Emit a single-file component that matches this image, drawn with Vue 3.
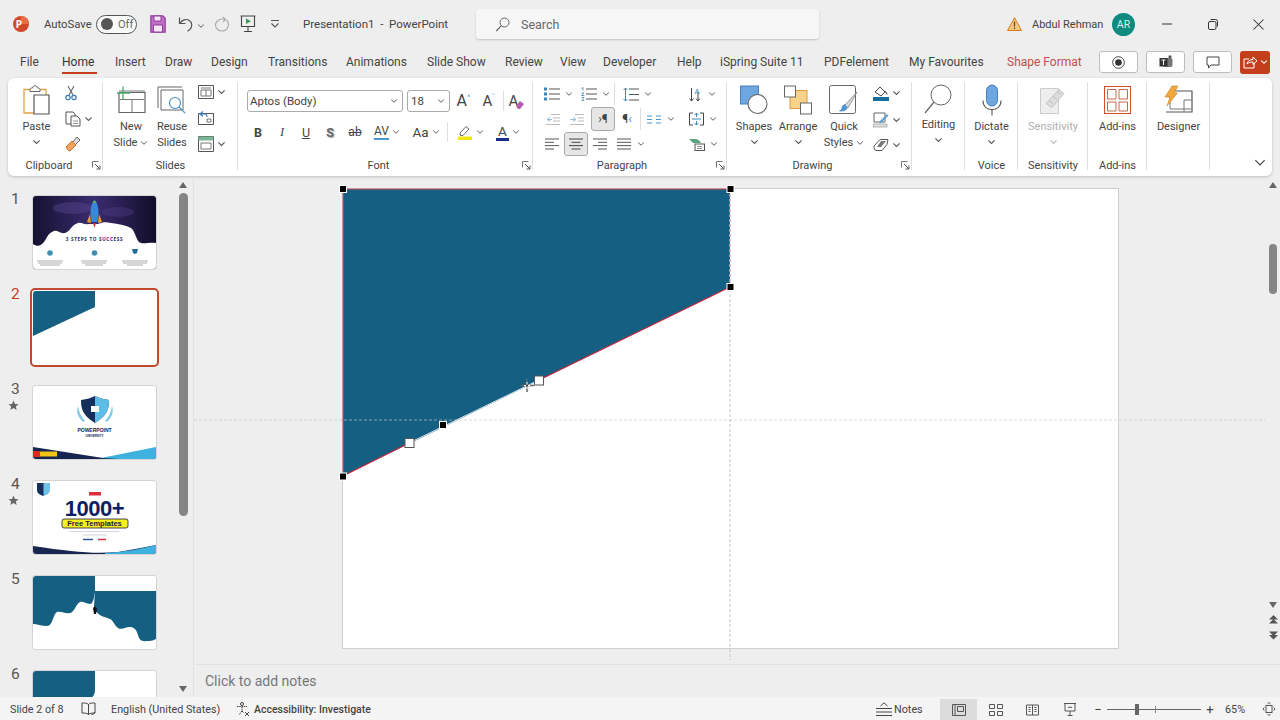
<script setup>
const tabs = [
  { t: 'File', x: 20 }, { t: 'Home', x: 62, active: true }, { t: 'Insert', x: 115 }, { t: 'Draw', x: 165 },
  { t: 'Design', x: 211 }, { t: 'Transitions', x: 268 }, { t: 'Animations', x: 346 }, { t: 'Slide Show', x: 427 },
  { t: 'Review', x: 505 }, { t: 'View', x: 560 }, { t: 'Developer', x: 603 }, { t: 'Help', x: 677 },
  { t: 'iSpring Suite 11', x: 720 }, { t: 'PDFelement', x: 824 }, { t: 'My Favourites', x: 909 }, { t: 'Shape Format', x: 1007, shape: true }
]
const tabItems = tabs.map((tab, i) => ({
  ...tab,
  width: (i < tabs.length - 1 ? tabs[i + 1].x : 1099) - tab.x
}))
</script>

<template>
  <div class="app">
    <svg class="defs" width="0" height="0">
      <symbol id="chev" viewBox="0 0 10 6"><path d="M1.5 1.2 5 4.6l3.5-3.4" fill="none" stroke="#555" stroke-width="1.2" /></symbol>
      <symbol id="launch" viewBox="0 0 9 9"><path d="M.5.5h6M.5.5v6" fill="none" stroke="#777" /><path d="M3 3l5 5M8 4.5V8H4.5" fill="none" stroke="#555" /></symbol>
    </svg>

    <header class="titlebar">
      <svg class="logo" width="18" height="18" viewBox="0 0 18 18"><circle cx="9" cy="9" r="8" fill="#d2492a" /><path d="M9 1a8 8 0 0 1 8 8H9z" fill="#ed6c47" /><text x="3.8" y="12.6" class="logo-t">P</text></svg>
      <span class="autosave">AutoSave</span>
      <span class="toggle"><i class="knob"></i><span>Off</span></span>
      <svg class="save" width="16" height="18" viewBox="0 0 16 18"><path d="M.8.8h12l2.4 2.4v14H.8z" fill="#c06fc6" stroke="#8e3f9a" stroke-width="1.2" /><path d="M4 1h7v5H4zM3.5 10h9v7h-9z" fill="#f6e6f7" stroke="#8e3f9a" /></svg>
      <svg class="undo" width="16" height="16" viewBox="0 0 16 16"><path d="M1.5 1.5v6h6M2 7.2C4 4 8 2.6 11 4.2c3.6 2 3.6 7 .5 9.5l-2 1.5" fill="none" stroke="#555" stroke-width="1.2" /></svg>
      <svg class="c8 undo-c" width="8" height="6"><use href="#chev" /></svg>
      <svg class="redo" width="16" height="16" viewBox="0 0 16 16"><path d="M9 1l2.500 2.500L9 6" fill="none" stroke="#aaa" stroke-width="1.100" /><path d="M11.500 3.500C7 2 2 4.500 1.500 8.500c-.3 4 3 6.500 6.500 6.500s6.500-2.500 6.500-6.500c0-2-1-3.500-2-4.500" fill="none" stroke="#aaa" stroke-width="1.100" /></svg>
      <svg class="present" width="16" height="18" viewBox="0 0 16 18"><path d="M.5 1h15M1.500 1v10.500h13V1M8 11.500V16M4 16.500h8" fill="none" stroke="#444" stroke-width="1.100" /><path d="M6 3.500l5 2.700-5 2.700z" fill="#3b9a5a" /></svg>
      <svg class="more" width="10" height="10" viewBox="0 0 10 10"><path d="M1 1.500h8M1.500 4.500 5 8l3.500-3.500" fill="none" stroke="#555" stroke-width="1.100" /></svg>
      <span class="doc">Presentation1 &nbsp;-&nbsp; PowerPoint</span>
      <div class="search">
        <svg width="15" height="15" viewBox="0 0 15 15"><circle cx="9.500" cy="5.500" r="4.500" fill="none" stroke="#666" /><path d="M6.200 8.800 1.200 14" stroke="#666" stroke-width="1.100" /></svg>
        <span>Search</span>
      </div>
      <svg class="warn" width="15" height="14" viewBox="0 0 15 14"><path d="M7.500.7 14.500 13.500H.5z" fill="#f7c87f" stroke="#d97a1e" /><path d="M7.500 4.500v5M7.500 10.500v1.500" stroke="#5a3d10" stroke-width="1.200" /></svg>
      <span class="user">Abdul Rehman</span>
      <span class="avatar">AR</span>
      <svg class="min" width="10" height="2"><path d="M0 1h10" stroke="#333" /></svg>
      <svg class="max" width="10" height="11" viewBox="0 0 10 11"><rect x=".5" y="2.500" width="7.500" height="8" rx="1.500" fill="none" stroke="#333" /><path d="M2.500.5h5a2 2 0 0 1 2 2v5" fill="none" stroke="#333" /></svg>
      <svg class="close" width="11" height="11"><path d="M.5.500l10 10M10.500.500l-10 10" stroke="#333" stroke-width="1.050" /></svg>
    </header>

    <nav class="tabs">
      <span v-for="tab in tabItems" :key="tab.t" class="tab" :class="{ active: tab.active, shape: tab.shape }" :style="{ width: tab.width + 'px' }"><b>{{ tab.t }}</b></span>
      <div class="tab-btns">
        <span class="tbtn"><svg width="13" height="13" viewBox="0 0 13 13"><circle cx="6.500" cy="6.500" r="5.800" fill="none" stroke="#444" /><circle cx="6.500" cy="6.500" r="3.300" fill="#333" /></svg></span>
        <span class="tbtn"><svg width="14" height="14" viewBox="0 0 14 14"><rect x="4" y="3" width="9.500" height="9" rx="2" fill="#777" /><rect x=".5" y="3" width="8" height="8.500" fill="#333" /><circle cx="11" cy="1.800" r="1.600" fill="#555" /><path d="M2.500 5h4M4.500 5v5" stroke="#fff" /></svg></span>
        <span class="tbtn"><svg width="14" height="13" viewBox="0 0 14 13"><path d="M1 1h12v8H5l-2.500 3V9H1z" fill="none" stroke="#444" /></svg></span>
        <span class="share"><svg width="15" height="14" viewBox="0 0 15 14"><path d="M1 4h5M1 4v9h10V8" fill="none" stroke="#fff" /><path d="M4 9c.5-3 3-4.500 6-4.500V2l4 3.800-4 3.700V7C8 7 5.500 7.500 4 9z" fill="none" stroke="#fff" /></svg><svg width="8" height="6" viewBox="0 0 10 6"><path d="M1.500 1.200 5 4.600l3.500-3.400" fill="none" stroke="#fff" stroke-width="1.400" /></svg></span>
      </div>
    </nav>

    <section class="ribbon">
      <div class="group g-clip">
        <div class="gbody">
          <div class="big w-paste">
            <svg width="28" height="32" viewBox="0 0 28 32"><path d="M2 5.500h22V29H2z" fill="#fff" stroke="#e0a347" stroke-width="1.300" /><path d="M8 5.500c0-1.500 1.500-1.500 2.500-1.500 0-3 5-3 5 0 1 0 2.500 0 2.500 1.500v2H8z" fill="#fff" stroke="#666" /><path d="M12 11h15v19H12z" fill="#fff" stroke="#555" stroke-width="1.200" /></svg>
            <span>Paste</span>
            <svg class="c8" width="9" height="6"><use href="#chev" /></svg>
          </div>
          <div class="col3 small-col">
            <svg width="12" height="16" viewBox="0 0 12 16"><path d="M3 1l5 9M9 1l-5 9" stroke="#666" stroke-width="1.100" /><circle cx="3" cy="12.500" r="2.200" fill="none" stroke="#3778b8" stroke-width="1.200" /><circle cx="9" cy="12.500" r="2.200" fill="none" stroke="#3778b8" stroke-width="1.200" /></svg>
            <span class="ico-c"><svg width="16" height="16" viewBox="0 0 16 16"><path d="M1 1h7l2 2v10H1z" fill="#fff" stroke="#555" /><path d="M6 5h6l3 3v7H6z" fill="#fff" stroke="#555" /><path d="M8 10h5M8 12.500h5" stroke="#777" stroke-width=".8" /></svg><svg class="c8" width="9" height="6"><use href="#chev" /></svg></span>
            <svg width="16" height="16" viewBox="0 0 16 16"><path d="M1 11l6-6 4 4-6 6c-2 0-3-2-4-4z" fill="#f0a35c" stroke="#c9702c" /><path d="M8 6l4-5 3 3-4 4" fill="#ddd" stroke="#666" /></svg>
          </div>
        </div>
        <div class="glabel pad13">Clipboard<svg class="launch" width="9" height="9"><use href="#launch" /></svg></div>
      </div>

      <div class="group g-slides">
        <div class="gbody">
          <div class="big w-new">
            <svg width="30" height="27" viewBox="0 0 30 27"><path d="M3 6h26v20H3z" fill="#fff" stroke="#666" stroke-width="1.200" /><path d="M3 4.500h26M4 13h24M16 13v13" stroke="#777" fill="none" /><path d="M7 0v13M1 6.500h13" stroke="#4aa96c" stroke-width="1.300" /></svg>
            <span>New</span>
            <span class="chev-line">Slide <svg width="8" height="6"><use href="#chev" /></svg></span>
          </div>
          <div class="big w-reuse">
            <svg width="30" height="28" viewBox="0 0 30 28"><path d="M1 1h24M1 1v21" fill="none" stroke="#666" /><path d="M4 4h22v20H4z" fill="#fff" stroke="#666" /><circle cx="18" cy="17" r="5.500" fill="#fff" stroke="#4e95c9" stroke-width="1.200" /><path d="M22 21l6 6" stroke="#4e95c9" stroke-width="1.300" /></svg>
            <span>Reuse</span>
            <span>Slides</span>
          </div>
          <div class="col3 w-sl">
            <span class="ico-c"><svg width="16" height="14" viewBox="0 0 16 14"><path d="M.5.500h15v13H.5z" fill="#fff" stroke="#555" /><path d="M3 3h10M3 5h10v6H3zM8 5v6" fill="none" stroke="#777" /></svg><svg class="c8" width="9" height="6"><use href="#chev" /></svg></span>
            <span class="ico-c"><svg width="16" height="14" viewBox="0 0 16 14"><path d="M.5 2.500h15v11H.5z" fill="#fff" stroke="#555" /><path d="M5 0.500L2 3l3 2.500M2 3h5c1.500 0 2 1 2 3" fill="none" stroke="#3778b8" stroke-width="1.100" /><path d="M9 8h4v3H9z" fill="none" stroke="#777" /></svg></span>
            <span class="ico-c"><svg width="16" height="16" viewBox="0 0 16 16"><path d="M.5.500h15v15H.5z" fill="#fff" stroke="#555" /><path d="M.5.500h15v4H.5z" fill="#7cb596" /><path d="M3 7h10v6H3z" fill="none" stroke="#777" /></svg><svg class="c8" width="9" height="6"><use href="#chev" /></svg></span>
          </div>
        </div>
        <div class="glabel">Slides</div>
      </div>

      <div class="group g-font">
        <div class="gbody gcol">
          <div class="row r1">
            <span class="combo fname">Aptos (Body)<svg width="8" height="6"><use href="#chev" /></svg></span>
            <span class="combo fsize">18<svg width="8" height="6"><use href="#chev" /></svg></span>
            <span class="grow-a">A<sup>^</sup></span>
            <span class="shrink-a">A<sup>˅</sup></span>
            <i class="vsep"></i>
            <span class="clear-a">A<svg width="10" height="10" viewBox="0 0 10 10"><path d="M1 6l4-5 4 3-4 5H3z" fill="#b65cb5" /></svg></span>
          </div>
          <div class="row r2">
            <span class="fb b">B</span>
            <span class="fb i">I</span>
            <span class="fb u">U</span>
            <span class="fb s">S</span>
            <span class="fb ab">ab</span>
            <span class="fb av"><span class="avt">AV</span><svg width="8" height="6"><use href="#chev" /></svg></span>
            <span class="fb aa">Aa<svg width="8" height="6"><use href="#chev" /></svg></span>
            <i class="vsep"></i>
            <span class="fb hl"><svg width="16" height="15" viewBox="0 0 16 15"><path d="M3 8 9 1.500l3 2.500-6 6.500H3.500z" fill="none" stroke="#666" /><rect x="1" y="11.500" width="14" height="3.500" fill="#f0e711" /></svg><svg width="8" height="6"><use href="#chev" /></svg></span>
            <span class="fb col"><span class="cola">A</span><svg width="8" height="6"><use href="#chev" /></svg></span>
          </div>
        </div>
        <div class="glabel pad14">Font<svg class="launch" width="9" height="9"><use href="#launch" /></svg></div>
      </div>

      <div class="group g-para">
        <div class="gbody para-body">
          <div class="para-left">
            <div class="prow">
              <span class="pi"><svg width="16" height="14" viewBox="0 0 16 14"><path d="M5 2h11M5 7h11M5 12h11" stroke="#555" /><path d="M0 .500h3v3H0zM0 5.500h3v3H0zM0 10.500h3v3H0z" fill="#3c87b8" /></svg></span><svg class="cc" width="8" height="6"><use href="#chev" /></svg>
              <span class="pi num"><svg width="16" height="14" viewBox="0 0 16 14"><path d="M5 2h11M5 7h11M5 12h11" stroke="#555" /><path d="M.5 1.500l1.500-1v3M.5 6h2.500l-2.500 2.500h2.800M.5 10.500h2.500L1.500 12l1.500 1.500H.5" fill="none" stroke="#3c87b8" stroke-width=".8" /></svg></span><svg class="cc" width="8" height="6"><use href="#chev" /></svg>
              <i class="vsep pv"></i>
              <span class="pi"><svg width="16" height="15" viewBox="0 0 16 15"><path d="M6 2h10M6 7.500h10M6 13h10" stroke="#555" /><path d="M2.500 1v13M.5 3l2-2 2 2M.5 12l2 2 2-2" fill="none" stroke="#3c87b8" /></svg></span><svg class="cc" width="8" height="6"><use href="#chev" /></svg>
            </div>
            <div class="prow">
              <span class="pi"><svg width="15" height="11" viewBox="0 0 15 11"><path d="M6 .5h9M8 4h7M8 7h7M1 10.500h14" stroke="#bbb" /><path d="M5 3.500 2 5.500l3 2M2 5.500h5" fill="none" stroke="#9dbfd8" /></svg></span>
              <span class="pi"><svg width="15" height="11" viewBox="0 0 15 11"><path d="M6 .5h9M9 4h6M9 7h6M1 10.500h14" stroke="#bbb" /><path d="M4 3.500 7 5.500 4 7.500M1 5.500h5" fill="none" stroke="#9dbfd8" /></svg></span>
              <span class="pi sel shift"><span class="pil">›¶</span></span>
              <span class="pi"><span class="pil">¶<em>‹</em></span></span>
              <i class="vsep pv2"></i>
              <span class="pi"><svg width="14" height="9" viewBox="0 0 14 9"><path d="M0 1h5M0 4.500h5M0 8h5M9 1h5M9 4.500h5M9 8h5" stroke="#4e95c9" stroke-width="1.100" /></svg></span><svg class="cc" width="8" height="6"><use href="#chev" /></svg>
            </div>
            <div class="prow">
              <span class="pi"><svg width="14" height="12" viewBox="0 0 14 12"><path d="M0 1h14M0 4.300h9M0 7.600h14M0 11h9" stroke="#555" /></svg></span>
              <span class="pi sel"><svg width="14" height="12" viewBox="0 0 14 12"><path d="M0 1h14M2.500 4.300h9M0 7.600h14M2.500 11h9" stroke="#444" /></svg></span>
              <span class="pi"><svg width="14" height="12" viewBox="0 0 14 12"><path d="M0 1h14M5 4.300h9M0 7.600h14M5 11h9" stroke="#555" /></svg></span>
              <span class="pi"><svg width="14" height="12" viewBox="0 0 14 12"><path d="M0 1h14M0 4.300h14M0 7.600h14M0 11h14" stroke="#555" /></svg></span><svg class="cc" width="8" height="6"><use href="#chev" /></svg>
            </div>
          </div>
          <div class="para-right">
            <span class="pr"><svg width="14" height="16" viewBox="0 0 14 16"><path d="M2.500 2v13M.5 12.500l2 2.500 2-2.500M9 6v9M7 12.500 9 15l2-2.500" fill="none" stroke="#444" /><text x="5.500" y="7.500" class="mini">A</text></svg><svg class="cc" width="8" height="6"><use href="#chev" /></svg></span>
            <span class="pr"><svg width="15" height="14" viewBox="0 0 15 14"><path d="M4 1H.5v12H4M11 1h3.500v12H11" fill="none" stroke="#444" /><path d="M7.500 1v4M5.500 3l2-2 2 2M7.500 9v4M5.500 11l2 2 2-2M3 7h9" fill="none" stroke="#3c87b8" /></svg><svg class="cc" width="8" height="6"><use href="#chev" /></svg></span>
            <span class="pr"><svg width="16" height="13" viewBox="0 0 16 13"><path d="M0 1h6c3 0 5 2 6 4H4z" fill="#5aa57f" /><rect x="6" y="6" width="9.500" height="6.500" fill="#fff" stroke="#555" /><path d="M8 8.500h5M8 10.500h5" stroke="#777" stroke-width=".8" /></svg><svg class="cc" width="8" height="6"><use href="#chev" /></svg></span>
          </div>
        </div>
        <div class="glabel pad16">Paragraph<svg class="launch" width="9" height="9"><use href="#launch" /></svg></div>
      </div>

      <div class="group g-draw">
        <div class="gbody">
          <div class="big w-shapes">
            <svg width="28" height="29" viewBox="0 0 28 29"><rect x=".5" y=".5" width="18" height="18" fill="#6ea6e0" stroke="#4a7fb8" /><circle cx="17.500" cy="18.500" r="9.500" fill="#fff" stroke="#666" stroke-width="1.100" /></svg>
            <span>Shapes</span>
            <svg class="c8" width="9" height="6"><use href="#chev" /></svg>
          </div>
          <div class="big w-arr">
            <svg width="28" height="29" viewBox="0 0 28 29"><rect x="6" y="5" width="17" height="18" fill="#f8d288" stroke="#e09a3d" /><rect x=".5" y=".5" width="11" height="11" fill="#fff" stroke="#666" /><rect x="16.500" y="17.500" width="11" height="11" fill="#fff" stroke="#666" /></svg>
            <span>Arrange</span>
            <svg class="c8" width="9" height="6"><use href="#chev" /></svg>
          </div>
          <div class="big w-qs">
            <svg width="30" height="30" viewBox="0 0 30 30"><rect x=".5" y=".5" width="26" height="28" rx="2" fill="#fff" stroke="#666" /><path d="M28 7 16 20l3 3z" fill="#d9d9d9" stroke="#777" stroke-width=".7" /><path d="M16 19c-3 1-3 3-3.500 4.500-.5 1.500-2 2-3 2.500 3 1 7 .5 9-2.500z" fill="#4e95d3" /></svg>
            <span>Quick</span>
            <span class="chev-line">Styles <svg width="8" height="6"><use href="#chev" /></svg></span>
          </div>
          <div class="col3 w-dsm">
            <span class="ico-c"><svg width="16" height="16" viewBox="0 0 16 16"><path d="M2 7l5-5 5 5-4 4z" fill="#fff" stroke="#444" /><path d="M12 6c1 1.500 2 2.500 2 3.500" stroke="#333" /><rect y="12" width="16" height="4" fill="#156e9e" /></svg><svg class="c8" width="9" height="6"><use href="#chev" /></svg></span>
            <span class="ico-c"><svg width="16" height="16" viewBox="0 0 16 16"><path d="M1 1h11v9H1z" fill="#fff" stroke="#666" /><path d="M7 9l7-7 1.500 1.500L8 11H6z" fill="#5f9ed1" /><rect y="12" width="14" height="3" fill="#e2e2e2" stroke="#888" stroke-width=".6" /></svg><svg class="c8" width="9" height="6"><use href="#chev" /></svg></span>
            <span class="ico-c"><svg width="16" height="14" viewBox="0 0 16 14"><path d="M1 8 7 1.500h8l-1 5-5 6H3C1.500 12.500 1 10 1 8z" fill="#fff" stroke="#555" /><path d="M8 3l5 0-5 6H4z" fill="#777" /></svg><svg class="c8" width="9" height="6"><use href="#chev" /></svg></span>
          </div>
        </div>
        <div class="glabel pad14">Drawing<svg class="launch" width="9" height="9"><use href="#launch" /></svg></div>
      </div>

      <div class="group g-edit">
        <div class="gbody">
          <div class="big w-full edit">
            <svg width="29" height="30" viewBox="0 0 29 30"><circle cx="17" cy="11" r="10" fill="none" stroke="#666" /><path d="M10 18 1 29" stroke="#666" stroke-width="1.200" /></svg>
            <span>Editing</span>
            <svg class="c8" width="9" height="6"><use href="#chev" /></svg>
          </div>
        </div>
        <div class="glabel"></div>
      </div>

      <div class="group g-voice">
        <div class="gbody">
          <div class="big w-full">
            <svg width="20" height="31" viewBox="0 0 20 31"><rect x="4.500" y=".5" width="11" height="21" rx="5.500" fill="#6ea6e0" stroke="#4a7fb8" /><path d="M1 16c0 6 4 9 9 9s9-3 9-9M10 25v6" fill="none" stroke="#555" stroke-width="1.100" /></svg>
            <span>Dictate</span>
            <svg class="c8" width="9" height="6"><use href="#chev" /></svg>
          </div>
        </div>
        <div class="glabel">Voice</div>
      </div>

      <div class="group g-sens">
        <div class="gbody">
          <div class="big w-full muted">
            <svg width="26" height="29" viewBox="0 0 26 29"><path d="M.5 3h18v25H.5z" fill="#eee" stroke="#ccc" /><path d="M6 18 19 4l5 4-12 14z" fill="#ddd" stroke="#c4c4c4" /><path d="M9 15l4 3M13 11l4 3M17 6l4 3" stroke="#bbb" /></svg>
            <span>Sensitivity</span>
            <svg class="c8 faded" width="9" height="6"><use href="#chev" /></svg>
          </div>
        </div>
        <div class="glabel">Sensitivity</div>
      </div>

      <div class="group g-add">
        <div class="gbody">
          <div class="big w-full">
            <svg width="27" height="28" viewBox="0 0 27 28"><rect x=".5" y=".5" width="26" height="27" fill="#fff" stroke="#d9492c" /><path d="M3.500 3.500h8.500v9.500H3.500zM15 3.500h8.500v9.500H15zM3.500 16h8.500v9H3.500zM15 16h8.500v9H15z" fill="#fff" stroke="#c76a4c" /></svg>
            <span>Add-ins</span>
          </div>
        </div>
        <div class="glabel">Add-ins</div>
      </div>

      <div class="group g-des">
        <div class="gbody">
          <div class="big w-full des">
            <svg width="29" height="28" viewBox="0 0 29 28"><path d="M6 5h22v21H2" fill="#fff" stroke="#555" stroke-width="1.200" /><path d="M6 8v15h21M20 14v12M20 14h8" fill="none" stroke="#777" /><path d="M8 0h6L10 7h3.500L3 20 6 11H1z" fill="#f2a93b" stroke="#d0812a" stroke-width=".6" /></svg>
            <span>Designer</span>
          </div>
        </div>
        <div class="glabel"></div>
      </div>

      <div class="ribbon-end"><svg width="12" height="7" viewBox="0 0 10 6"><path d="M1 1l4 4 4-4" fill="none" stroke="#444" /></svg></div>
    </section>

    <main class="main">
      <aside class="thumbs">
        <div class="thumb-list">
          <div class="trow">
            <span class="tnum">1</span>
            <svg class="thumb" viewBox="0 0 123 73">
              <defs><linearGradient id="sky" x1="0" x2="1" y1="0" y2="0"><stop offset="0" stop-color="#151230" /><stop offset=".5" stop-color="#3a2c70" /><stop offset="1" stop-color="#120e28" /></linearGradient></defs>
              <rect width="123" height="73" fill="url(#sky)" />
              <ellipse cx="40" cy="12" rx="20" ry="6" fill="#5a4a96" opacity=".4" /><ellipse cx="85" cy="16" rx="16" ry="5" fill="#5a4a96" opacity=".3" />
              <path d="M0 48c4 3 8 2 11-2s4-9 10-11c4-1 6 3 11 2s6-8 13-10c4-1 6 2 10 1h10c5-2 8-2 13-1 7 1 14 2 20 5 4 3 5 11 8 14 4 3 9 0 17 1v26H0z" fill="#fff" />
              <path d="M61.500 4c3 3 4 7 4 14l-1 8h-6l-1-8c0-7 1-11 4-14z" fill="#3b86d6" /><path d="M61.500 4l2 3h-4z" fill="#59b55c" /><path d="M57 18l-3 8 4 1zM66 18l3 8-4 1z" fill="#eea21f" /><path d="M60 27h3l-1.500 5z" fill="#d5312c" />
              <text x="61.500" y="44.500" class="t1">3 STEPS TO SUCCESS</text>
              <circle cx="17" cy="57" r="2.800" fill="#3f8fb0" /><circle cx="61.500" cy="57" r="2.800" fill="#3f8fb0" /><path d="M99 53h6l-1 4-2 1-2-1z" fill="#1e6d9c" />
              <path d="M4 65h26M5 67h24M7 69h20M48 65h26M49 67h24M52 69h18M89 65h26M90 67h24M94 69h16" stroke="#8a8a8a" stroke-width=".7" />
            </svg>
          </div>
          <div class="trow current">
            <span class="tnum">2</span>
            <span class="tcur"><svg class="thumb plain" viewBox="0 0 123 73"><rect width="123" height="73" fill="#fff" /><path d="M0 0h62v16L0 45z" fill="#156082" /></svg></span>
          </div>
          <div class="trow">
            <span class="tnum">3<svg class="star" width="11" height="11" viewBox="0 0 11 11"><path d="M5.500.5l1.500 3.400 3.500.3-2.700 2.300.9 3.500-3.200-1.900-3.200 1.900.9-3.500L.5 4.200 4 3.900z" fill="#666" /></svg></span>
            <svg class="thumb" viewBox="0 0 123 73">
              <rect width="123" height="73" fill="#fff" />
              <path d="M48 14c6-1 10-2 14-4 4 2 8 3 14 4 0 8-1 15-14 23-13-8-14-15-14-23z" fill="#16305e" /><path d="M62 10c4 2 8 3 14 4 0 8-1 15-14 23z" fill="#5dbde6" /><path d="M45 20c-2 6 0 11 5 16l2-1c-4-4-6-9-7-15zM79 20c2 6 0 11-5 16l-2-1c4-4 6-9 7-15z" fill="#7cc9ec" /><path d="M58 20h8v6h-8z" fill="#fff" />
              <text x="61.500" y="46" class="t3">POWERPOINT</text><text x="61.500" y="50.500" class="t3b">UNIVERSITY</text>
              <path d="M0 61 70 72 123 64V73H0z" fill="#16264f" /><path d="M68 72 123 61V73H86z" fill="#3fb1de" /><rect x="0" y="65" width="7" height="6" fill="#e02a20" /><rect x="7" y="65.500" width="17" height="5" fill="#f3c418" />
            </svg>
          </div>
          <div class="trow">
            <span class="tnum">4<svg class="star" width="11" height="11" viewBox="0 0 11 11"><path d="M5.500.5l1.500 3.400 3.500.3-2.700 2.300.9 3.500-3.200-1.900-3.200 1.900.9-3.500L.5 4.200 4 3.900z" fill="#666" /></svg></span>
            <svg class="thumb" viewBox="0 0 123 73">
              <rect width="123" height="73" fill="#fff" />
              <path d="M4 2h13v7c0 3-3 5-6.500 6C7 14 4 12 4 9z" fill="#6fc2e3" /><path d="M4 2h6.500v13C7 14 4 12 4 9z" fill="#16305e" />
              <rect x="56" y="11" width="12" height="3.500" fill="#d9303a" />
              <text x="61.500" y="35" class="t4">1000+</text>
              <rect x="29" y="38" width="66" height="9" rx="2" fill="#f6f01c" stroke="#1b1b3e" stroke-width=".8" />
              <text x="61.500" y="45.200" class="t4b">Free Templates</text>
              <path d="M36 50.500h50M50 54h24" stroke="#aab" stroke-width=".5" /><path d="M50 58.500h10" stroke="#2e5aa0" stroke-width="1.500" /><path d="M65 58.500h8" stroke="#d9303a" stroke-width="1.500" />
              <path d="M0 65c40 6 60 8 85 6 14-2 26-5 38-7v9H0z" fill="#16264f" /><path d="M72 72c20-1 35-4 51-8v9H72z" fill="#3fb1de" />
            </svg>
          </div>
          <div class="trow">
            <span class="tnum">5</span>
            <svg class="thumb" viewBox="0 0 123 73">
              <rect width="123" height="73" fill="#fff" />
              <path d="M0 0H62V16C61 22 60 28 57 28 53 28 50 25 47 26 43 28 41 37 37 37 32 38 29 35 24 36 20 38 20 50 14 50 8 50 4 48 0 48Z" fill="#156082" />
              <path d="M62 15H123V63C119 65 117 65 114 65 108 66 106 63 105 59 103 52 100 51 96 51 90 52 88 54 85 52 81 49 80 44 77 43 72 41 68 40 67 39 64 37 61 34 61 30Z" fill="#156082" />
              <path d="M60 32l2-2 2 3-1 5h-2z" fill="#111" />
            </svg>
          </div>
          <div class="trow">
            <span class="tnum">6</span>
            <svg class="thumb" viewBox="0 0 123 73"><rect width="123" height="73" fill="#fff" /><path d="M0 0h62v20c-1 6-4 8-7 7-4-2-5 0-10 1H0z" fill="#156082" /></svg>
          </div>
        </div>
        <div class="thumb-scroll">
          <i class="arrow up"></i>
          <i class="sthumb"></i>
          <span class="spacer"></span>
          <i class="arrow down"></i>
        </div>
      </aside>

      <div class="editor">
        <div class="stage">
          <div class="canvas">
            <div class="slide"></div>
            <svg class="overlay" viewBox="194 178 1071 486" width="1071" height="486">
              <path d="M343 189H730V287L343 476Z" fill="#156082" />
              <path d="M343 476V189H730" fill="none" stroke="#d4505f" stroke-width="1" />
              <path d="M343 476 409 443M539 380 730 287" fill="none" stroke="#c8283c" stroke-width="1.200" />
              <path d="M409 443 539 380" fill="none" stroke="#dfe8ee" stroke-width="1" />
              <path d="M194 420H1265" stroke="#c4c4c4" stroke-opacity=".65" stroke-dasharray="3 2" />
              <path d="M730 189V660" stroke="#c4c4c4" stroke-dasharray="3 2" />
              <path d="M730 189V287" stroke="#e8a0a8" stroke-dasharray="3 2" />
              <g fill="#000" stroke="#fff" stroke-width="1">
                <rect x="339.500" y="185.500" width="7" height="7" />
                <rect x="727" y="185.500" width="7" height="7" />
                <rect x="727" y="283.500" width="7" height="7" />
                <rect x="339.500" y="473" width="7" height="7" />
                <rect x="439.500" y="421.500" width="7" height="7" />
              </g>
              <g fill="#fff" stroke="#555" stroke-width="1">
                <rect x="405" y="438.500" width="9" height="9" />
                <rect x="534.500" y="376" width="9" height="9" />
              </g>
              <path d="M527 379V392M521 385.500H534" stroke="#666" stroke-width="1.500" />
              <path d="M527 382V389M524 385.500H530" stroke="#fff" stroke-width="1" />
              <circle cx="527" cy="385.500" r="1" fill="#222" />
            </svg>
          </div>
          <div class="vscroll">
            <i class="arrow up sm"></i>
            <i class="vthumb"></i>
            <span class="spacer"></span>
            <i class="arrow down sm"></i>
            <svg class="pg" width="9" height="9" viewBox="0 0 9 9"><path d="M4.500 0 9 4.500H0zM4.500 4 9 8.500H0z" fill="#555" /></svg>
            <svg class="pg" width="9" height="9" viewBox="0 0 9 9"><path d="M0 .5h9L4.500 5zM0 4h9L4.500 8.500z" fill="#555" /></svg>
          </div>
        </div>
        <div class="notes">Click to add notes</div>
      </div>
    </main>

    <footer class="status">
      <span class="st-slide">Slide 2 of 8</span>
      <svg class="st-book" width="15" height="14" viewBox="0 0 15 14"><path d="M7.500 2.500C6 1 3.500.8 1 1v10c2.500 0 5 .2 6.500 1.500C9 11.200 11.500 11 14 11V1c-2.500-.2-5 0-6.500 1.500zM7.500 2.500v10" fill="none" stroke="#444" /><path d="M10 11.500l1.500 1.500 2.500-3" fill="none" stroke="#444" /></svg>
      <span class="st-lang">English (United States)</span>
      <svg class="st-acc" width="14" height="14" viewBox="0 0 14 14"><circle cx="6" cy="2" r="1.500" fill="none" stroke="#444" /><path d="M1 4.500h10M6 5v4M6 9l-3 4M6 9l2 2" fill="none" stroke="#444" stroke-dasharray="1.500 .7" /><path d="M9 10l4 4M13 10l-4 4" stroke="#444" /></svg>
      <span class="st-acct">Accessibility: Investigate</span>
      <span class="spacer"></span>
      <svg class="st-notes" width="16" height="15" viewBox="0 0 16 15"><path d="M4.500 4 8 .8 11.500 4M0 6.500h16M0 10h16M0 13.500h16" fill="none" stroke="#444" /></svg>
      <span class="st-ntext">Notes</span>
      <span class="view on"><svg width="14" height="12" viewBox="0 0 14 12"><path d="M.5.500h13v11H.5zM3 .5v11M5.500 2.500h6v5h-6z" fill="none" stroke="#555" /></svg></span>
      <span class="view"><svg width="14" height="12" viewBox="0 0 14 12"><path d="M.5.500h5v4h-5zM8.500.500h5v4h-5zM.5 7.500h5v4h-5zM8.500 7.500h5v4h-5z" fill="none" stroke="#555" /></svg></span>
      <span class="view"><svg width="13" height="12" viewBox="0 0 13 12"><path d="M.5 1h12v10H.5zM6.500 1v10M2.500 3.500h2M2.500 5.500h2M2.500 7.500h2M8.500 3.500h2M8.500 5.500h2M8.500 7.500h2" fill="none" stroke="#555" /></svg></span>
      <span class="view"><svg width="12" height="13" viewBox="0 0 12 13"><path d="M0 .5h12M1 .5v7.500h10V.5M6 8v4M3.500 12.500h5M4 4.300h4" fill="none" stroke="#555" /></svg></span>
      <span class="zoom-m">−</span>
      <span class="slider"><i class="tick"></i><i class="sknob"></i></span>
      <span class="zoom-p">+</span>
      <span class="zoom-v">65%</span>
      <svg class="fit" width="14" height="14" viewBox="0 0 14 14"><rect x="4" y="3.500" width="6" height="7" fill="none" stroke="#555" /><path d="M5.500 1.800 7 .5l1.500 1.300M5.500 12.200 7 13.500l1.500-1.300M2.300 5.500 1 7l1.300 1.500M11.700 5.500 13 7l-1.300 1.500" fill="none" stroke="#555" /></svg>
    </footer>
  </div>
</template>

<style>
html, body { margin: 0; background: #eeeeee; }
</style>

<style scoped>
.app { width: 1280px; height: 720px; overflow: hidden; background: #eeeeee; display: flex; flex-direction: column; font-family: Roboto, "Noto Sans", sans-serif; font-size: 12px; color: #444; }
.defs { position: absolute; }
svg { display: block; flex: none; }
i { display: block; }
.spacer { flex: 1; }

.titlebar { height: 48px; flex: none; display: flex; align-items: center; }
.logo { margin-left: 12px; }
.logo-t { font: 700 10px "Noto Sans", sans-serif; fill: #fff; }
.autosave { margin-left: 14px; width: 52px; font-size: 11.300px; }
.toggle { width: 41px; height: 19px; box-sizing: border-box; border: 1px solid #555; border-radius: 10px; display: flex; align-items: center; gap: 5px; padding-left: 4px; font-size: 11px; background: #fafafa; color: #666; }
.knob { width: 12px; height: 12px; border-radius: 50%; background: #555; }
.save { margin-left: 13px; }
.undo { margin-left: 12px; }
.undo-c { margin-left: 3px; margin-top: 2px; }
.redo { margin-left: 9px; }
.present { margin-left: 10px; }
.more { margin-left: 14px; }
.doc { margin-left: 23px; width: 173px; font-size: 11.500px; white-space: nowrap; }
.search { width: 343px; height: 30px; box-sizing: border-box; background: #f6f6f6; border-radius: 3px; box-shadow: 0 1px 2px rgba(0,0,0,.18); display: flex; align-items: center; gap: 11px; padding-left: 19px; color: #666; font-size: 12.500px; }
.warn { margin-left: 188px; }
.user { margin-left: 10px; width: 80px; white-space: nowrap; font-size: 11px; }
.avatar { width: 23px; height: 23px; border-radius: 50%; background: #0f8a80; color: #d8f0ee; display: flex; align-items: center; justify-content: center; font-size: 10.500px; }
.min { margin-left: 27px; }
.max { margin-left: 36px; }
.close { margin-left: 35px; }

.tabs { height: 30px; flex: none; display: flex; padding-left: 20px; box-sizing: border-box; }
.tab { display: block; height: 30px; white-space: nowrap; }
.tab b { display: inline-block; font-weight: 400; font-size: 12px; height: 28px; line-height: 29px; }
.tab.active b { border-bottom: 2px solid #c43e1c; box-sizing: border-box; height: 25.500px; color: #333; width: 35px; }
.tab.shape { color: #c2504a; }
.tab-btns { display: flex; gap: 8px; align-items: center; height: 26px; margin-top: 1px; }
.tbtn { width: 39px; height: 22px; background: #fff; border: 1px solid #bdbdbd; border-radius: 3px; box-sizing: border-box; display: flex; align-items: center; justify-content: center; }
.share { width: 30px; height: 23px; background: #c43e1c; border-radius: 3px; display: flex; align-items: center; justify-content: center; gap: 2px; }

.ribbon { margin: 0 8px 2px; height: 98px; flex: none; background: #fff; border-radius: 6px; box-shadow: 0 1px 3px rgba(0,0,0,.2); display: flex; }
.group { flex: none; box-sizing: border-box; display: flex; flex-direction: column; position: relative; }
.group::after { content: ""; position: absolute; right: 0; top: 4px; bottom: 6px; width: 1px; background: #dedede; }
.g-clip { width: 95px; }
.g-slides { width: 135px; }
.g-font { width: 295px; }
.g-para { width: 194px; }
.g-draw { width: 185px; }
.g-edit { width: 53px; }
.g-voice { width: 53px; }
.g-sens { width: 70px; }
.g-add { width: 59px; }
.g-des { width: 63px; }
.gbody { height: 78px; display: flex; box-sizing: border-box; padding-top: 6px; }
.gcol { flex-direction: column; }
.glabel { height: 20px; display: flex; align-items: center; justify-content: center; font-size: 11px; position: relative; color: #444; padding-bottom: 1px; box-sizing: border-box; }
.pad13 { padding-right: 13px; }
.pad14 { padding-right: 14px; }
.pad16 { padding-right: 16px; }
.launch { position: absolute; right: 2px; top: 5px; }

.big { display: flex; flex-direction: column; align-items: center; font-size: 11px; line-height: 16px; white-space: nowrap; }
.big > span { display: flex; align-items: center; gap: 3px; }
.big > svg:first-child { height: 32px; margin-bottom: 3px; }
.c8 { margin-top: 4px; }
.ico-c .c8 { margin-top: 0; margin-left: 3px; }
.w-paste { width: 41px; margin-left: 9px; }
.small-col { margin-left: 9px; width: 40px; }
.col3 { display: flex; flex-direction: column; justify-content: space-between; align-items: flex-start; height: 68px; padding-top: 1px; box-sizing: border-box; }
.ico-c { display: flex; align-items: center; }
.w-new { width: 44px; margin-left: 6px; }
.w-reuse { width: 40px; margin-left: -1px; }
.w-sl { margin-left: 6px; }

.row { display: flex; align-items: center; }
.r1 { padding-left: 9px; margin-top: 6px; height: 22px; }
.combo { height: 22px; box-sizing: border-box; border: 1px solid #aaa; border-radius: 3px; display: flex; align-items: center; justify-content: space-between; padding: 0 4px 0 2px; font-size: 11.500px; }
.fname { width: 156px; }
.fsize { width: 43px; margin-left: 4px; padding-left: 3px; }
.grow-a, .shrink-a { font-size: 15px; width: 25px; text-align: center; display: block; line-height: 20px; white-space: nowrap; }
.grow-a { margin-left: 1px; font-size: 16px; }
.grow-a sup, .shrink-a sup { font-size: 8px; color: #4e95c9; vertical-align: 6px; line-height: 0; }
.clear-a { font-size: 15px; width: 22px; display: flex; align-items: center; justify-content: center; }
.clear-a svg { margin: 8px 0 0 -3px; }
.vsep { width: 1px; height: 20px; background: #dedede; margin: 0 2px; }
.r2 { padding-left: 8px; margin-top: 8px; height: 24px; }
.fb { width: 24px; height: 24px; display: flex; align-items: center; justify-content: center; gap: 3px; font-size: 12.500px; flex: none; }
.b { font-weight: 700; }
.i { font-style: italic; font-family: "Liberation Serif", serif; }
.u { text-decoration: underline; }
.s { font-weight: 700; text-shadow: 1px 1px 1px #aaa; color: #666; }
.ab { text-decoration: line-through; font-size: 12px; margin-left: 1px; }
.av { width: 38px; margin-left: 1px; }
.avt { border-bottom: 2px solid #4e95c9; line-height: 13px; font-size: 12px; }
.aa { width: 38px; margin-left: 1px; font-size: 13.500px; }
.hl { width: 38px; margin-left: 1px; }
.col { width: 38px; }
.cola { border-bottom: 3px solid #1b2d8a; line-height: 14px; font-size: 13.500px; padding: 0 2px; }

.para-body { padding: 4px 0 0 7px; }
.para-left { width: 146px; display: flex; flex-direction: column; gap: 1px; }
.prow { height: 24px; display: flex; align-items: center; }
.pi { width: 24px; height: 24px; display: flex; align-items: center; justify-content: center; flex: none; box-sizing: border-box; }
.pi.sel { background: #e6e6e6; border: 1px solid #aaa; border-radius: 3px; }
.pi.shift { margin-left: 3px; }
.cc { margin-left: 1px; margin-right: 4px; }
.pv { margin: 0 4px 0 0; height: 22px; }
.pv2 { margin: 0 1px; height: 22px; }
.pil { font-size: 12px; }
.pil em { color: #3c87b8; font-style: normal; }
.para-right { display: flex; flex-direction: column; gap: 1px; width: 37px; }
.pr { height: 24px; display: flex; align-items: center; gap: 4px; padding-left: 3px; }
.mini { font: 8px Roboto, sans-serif; fill: #3c87b8; }

.w-shapes { width: 44px; margin-left: 5px; }
.w-arr { width: 44px; }
.w-qs { width: 46px; margin-left: 1px; }
.w-dsm { margin-left: 6px; }
.w-full { width: 100%; }
.edit > svg:first-child { margin-bottom: 2px; margin-top: -1px; }
.muted { color: #b0b0b0; }
.faded { opacity: .4; }
.ribbon-end { flex: 1; display: flex; align-items: flex-end; justify-content: flex-end; padding: 0 6px 10px 0; }

.main { flex: 1; min-height: 0; display: flex; }
.thumbs { width: 194px; flex: none; display: flex; border-right: 1px solid #e2e2e2; box-sizing: border-box; }
.thumb-list { width: 172px; overflow: hidden; padding-top: 18px; box-sizing: border-box; }
.trow { height: 95px; display: flex; align-items: flex-start; }
.tnum { width: 33px; box-sizing: border-box; padding-left: 11px; margin-top: -6px; font-size: 15.500px; line-height: 18px; color: #555; display: flex; flex-direction: column; gap: 2px; flex: none; }
.star { margin-left: -3px; }
.thumb { width: 123px; height: 73px; border-radius: 3px; box-shadow: 0 0 0 1px #d4d4d4; background: #fff; }
.thumb.plain { box-shadow: none; }
.current .tnum { color: #c43e1c; }
.tcur { display: block; margin: -3px 0 0 -3px; border: 2.500px solid #c0492f; border-radius: 5px; padding: 1px; background: #fff; }
.t1 { font: 700 4.600px "Noto Sans", sans-serif; letter-spacing: .7px; fill: #1a2c5a; text-anchor: middle; }
.t3 { font: 700 5px "Liberation Sans", sans-serif; fill: #16264f; text-anchor: middle; }
.t3b { font: 700 3px "Liberation Sans", sans-serif; fill: #16264f; text-anchor: middle; }
.t4 { font: 700 22px "Liberation Sans", sans-serif; fill: #0d1f63; text-anchor: middle; letter-spacing: -.5px; }
.t4b { font: 700 7.500px "Liberation Sans", sans-serif; fill: #1b1b3e; text-anchor: middle; }
.thumb-scroll { flex: 1; display: flex; flex-direction: column; align-items: flex-start; padding: 4px 0 5px 7px; box-sizing: border-box; }
.arrow { width: 0; height: 0; border-left: 4.500px solid transparent; border-right: 4.500px solid transparent; }
.arrow.up { border-bottom: 6px solid #666; }
.arrow.down { border-top: 6px solid #666; }
.sthumb { width: 9px; height: 323px; border-radius: 5px; background: #858585; margin-top: 5px; }

.editor { flex: 1; display: flex; flex-direction: column; min-width: 0; }
.stage { height: 486px; flex: none; display: flex; border-bottom: 1px solid #e2e2e2; }
.canvas { width: 1071px; position: relative; flex: none; padding: 10px 0 0 148px; box-sizing: border-box; }
.slide { width: 777px; height: 461px; box-sizing: border-box; background: #fff; border: 1px solid #cfcfcf; }
.overlay { position: absolute; left: 0; top: 0; }
.vscroll { flex: 1; display: flex; flex-direction: column; align-items: center; padding: 4px 0 24px 1px; box-sizing: border-box; }
.arrow.sm { border-left-width: 4px; border-right-width: 4px; }
.vthumb { width: 8px; height: 50px; border-radius: 4px; background: #858585; margin-top: 56px; }
.pg { margin-top: 7px; }
.notes { flex: 1; padding-left: 11px; display: flex; align-items: center; font-size: 14px; color: #777; }

.status { height: 23px; flex: none; background: #f4f4f4; display: flex; align-items: center; font-size: 10.800px; white-space: nowrap; padding-top: 1px; box-sizing: border-box; }
.st-slide { margin-left: 10px; width: 71px; }
.st-lang { margin-left: 15px; width: 125px; }
.st-acct { margin-left: 4px; font-weight: 500; font-size: 10.500px; }
.st-ntext { margin-left: 2px; width: 46px; }
.view { width: 37px; height: 21px; display: flex; align-items: center; justify-content: center; align-self: flex-end; }
.view.on { background: #dcdcdc; }
.zoom-m { margin-left: 5px; width: 10px; font-size: 13px; text-align: center; }
.slider { width: 94px; height: 1px; background: #666; position: relative; margin: 0 3px 0 4px; }
.tick { position: absolute; left: 48px; top: -3px; width: 1px; height: 7px; background: #888; }
.sknob { position: absolute; left: 28px; top: -5px; width: 4px; height: 11px; background: #666; }
.zoom-p { width: 12px; font-size: 13px; text-align: center; }
.zoom-v { margin-left: 9px; width: 37px; }
.fit { margin-right: 4px; }
</style>
